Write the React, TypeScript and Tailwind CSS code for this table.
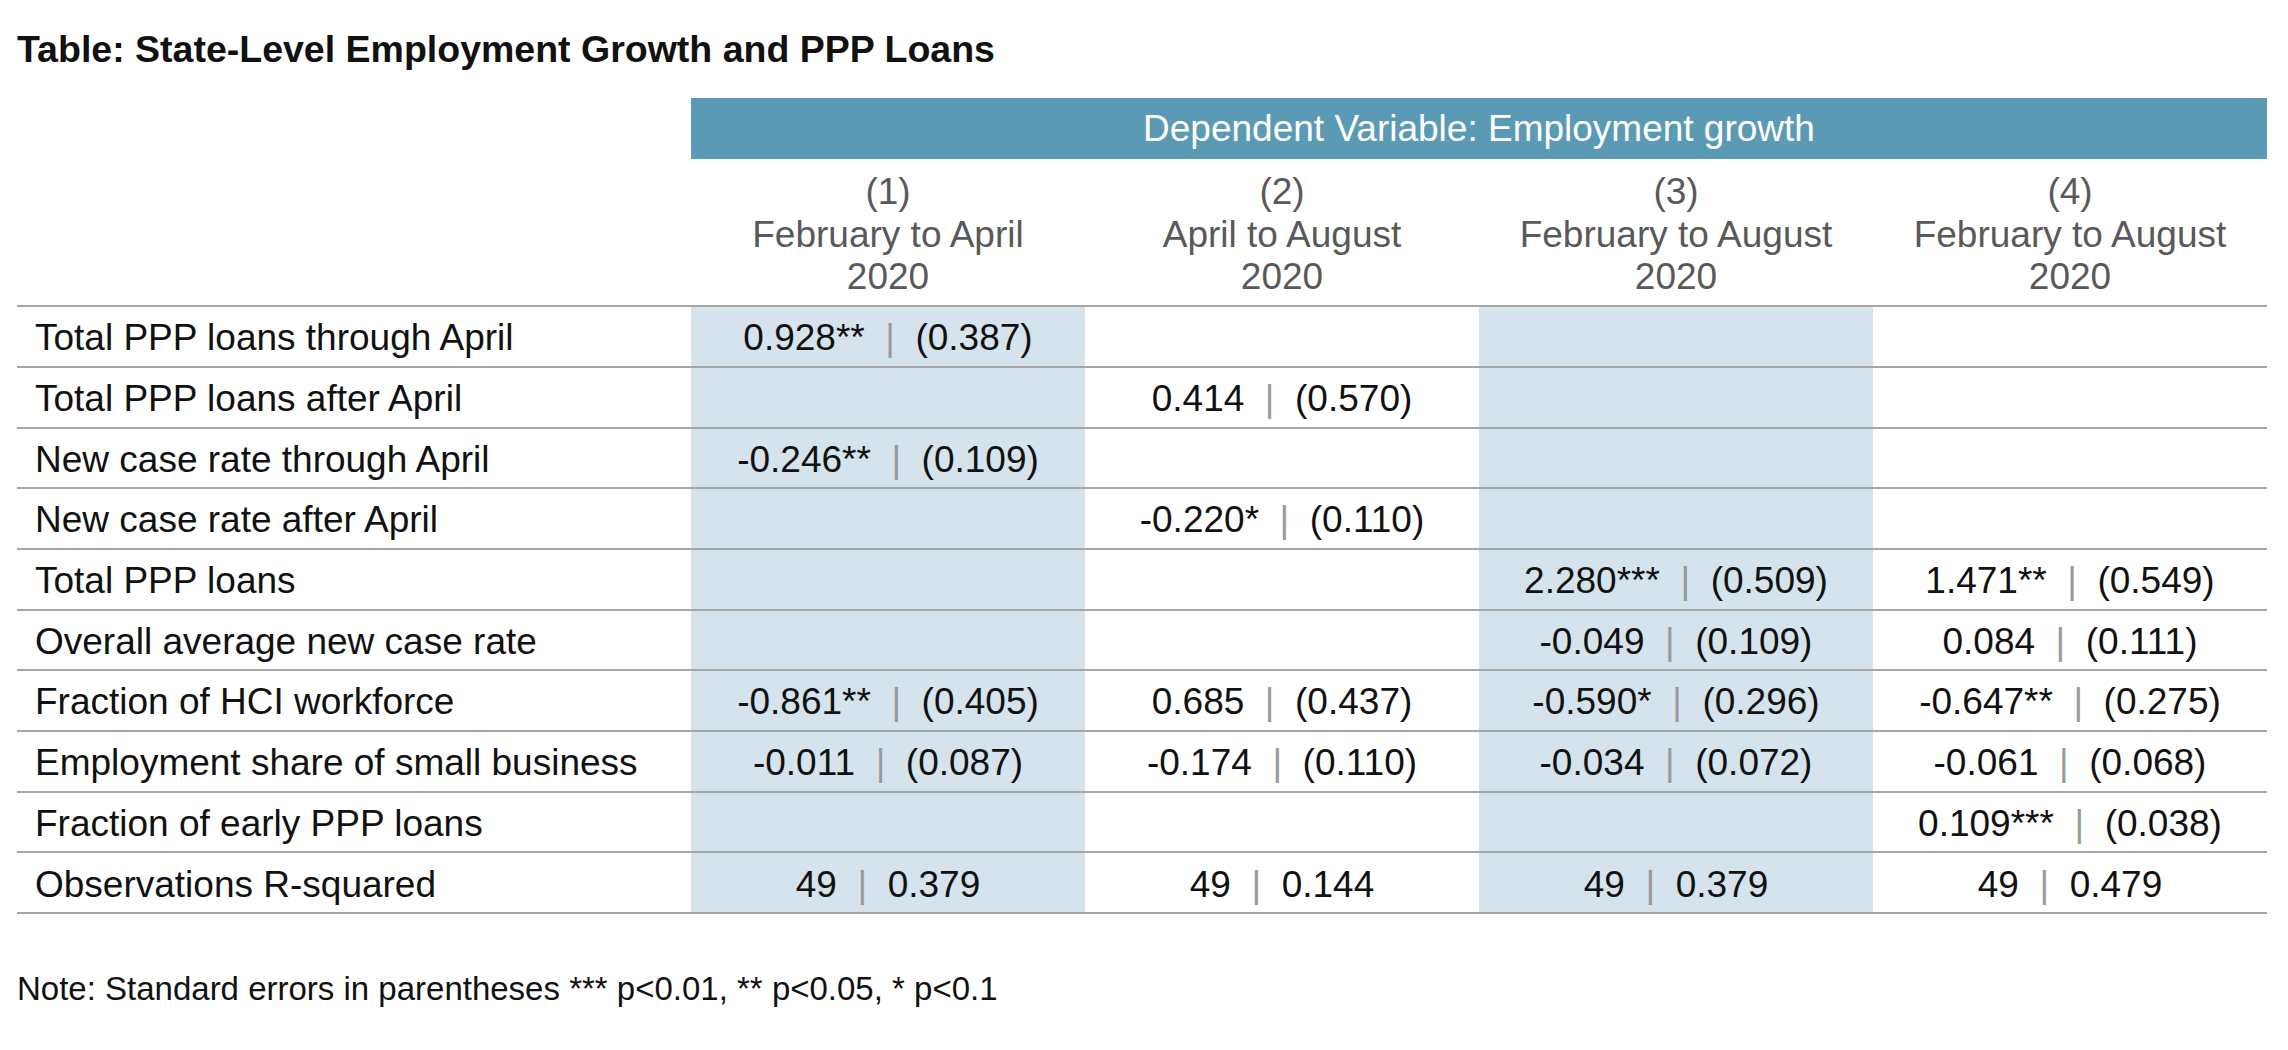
import React from 'react'

type Cell = [string, string] | null

const rows: [string, Cell, Cell, Cell, Cell][] = [
  ['Total PPP loans through April', ['0.928**', '(0.387)'], null, null, null],
  ['Total PPP loans after April', null, ['0.414', '(0.570)'], null, null],
  ['New case rate through April', ['-0.246**', '(0.109)'], null, null, null],
  ['New case rate after April', null, ['-0.220*', '(0.110)'], null, null],
  ['Total PPP loans', null, null, ['2.280***', '(0.509)'], ['1.471**', '(0.549)']],
  ['Overall average new case rate', null, null, ['-0.049', '(0.109)'], ['0.084', '(0.111)']],
  ['Fraction of HCI workforce', ['-0.861**', '(0.405)'], ['0.685', '(0.437)'], ['-0.590*', '(0.296)'], ['-0.647**', '(0.275)']],
  ['Employment share of small business', ['-0.011', '(0.087)'], ['-0.174', '(0.110)'], ['-0.034', '(0.072)'], ['-0.061', '(0.068)']],
  ['Fraction of early PPP loans', null, null, null, ['0.109***', '(0.038)']],
  ['Observations R-squared', ['49', '0.379'], ['49', '0.144'], ['49', '0.379'], ['49', '0.479']],
]

const columns = [
  ['(1)', 'February to April', '2020'],
  ['(2)', 'April to August', '2020'],
  ['(3)', 'February to August', '2020'],
  ['(4)', 'February to August', '2020'],
]

const DataCell: React.FC<{ cell: Cell; shaded: boolean }> = ({ cell, shaded }) => (
  <div className={`w-[394px] h-full flex items-center justify-center pt-1 ${shaded ? 'bg-[#d5e3ec]' : ''}`}>
    {cell && (
      <span className="whitespace-pre">
        {cell[0]}
        <span className="text-[#9a9a9a]">{'  |  '}</span>
        {cell[1]}
      </span>
    )}
  </div>
)

export default function App() {
  return (
    <div className="w-[2288px] h-[1050px] bg-white text-[#111] font-['Liberation_Sans',Arial,sans-serif]">
      <h1 className="pl-[17px] pt-[27.5px] text-[37.5px] font-bold leading-[1.15]">
        Table: State-Level Employment Growth and PPP Loans
      </h1>

      <div className="ml-[17px] w-[2250px] mt-[27px] text-[37px] leading-[1.15]">
        {/* header */}
        <div className="ml-[674px] h-[61px] bg-[#5b9ab5] text-white flex items-center justify-center pt-[2px]">
          Dependent Variable: Employment growth
        </div>
        <div className="flex border-b-2 border-[#a6a6a6] pt-[12.5px] pb-[6.5px]">
          <div className="w-[674px]" />
          {columns.map((c) => (
            <div key={c[0]} className="w-[394px] flex flex-col items-center text-[#595959]">
              {c.map((line, i) => (
                <span key={i}>{line}</span>
              ))}
            </div>
          ))}
        </div>

        {/* body */}
        {rows.map((r) => (
          <div key={r[0]} className="flex h-[60.7px] border-b-2 border-[#a6a6a6]">
            <div className="w-[674px] pl-[18px] pt-1 flex items-center">{r[0]}</div>
            <DataCell cell={r[1]} shaded />
            <DataCell cell={r[2]} shaded={false} />
            <DataCell cell={r[3]} shaded />
            <DataCell cell={r[4]} shaded={false} />
          </div>
        ))}
      </div>

      <p className="pl-[17px] mt-[55.6px] text-[33px] leading-[1.15]">
        Note: Standard errors in parentheses *** p&lt;0.01, ** p&lt;0.05, * p&lt;0.1
      </p>
    </div>
  )
}
